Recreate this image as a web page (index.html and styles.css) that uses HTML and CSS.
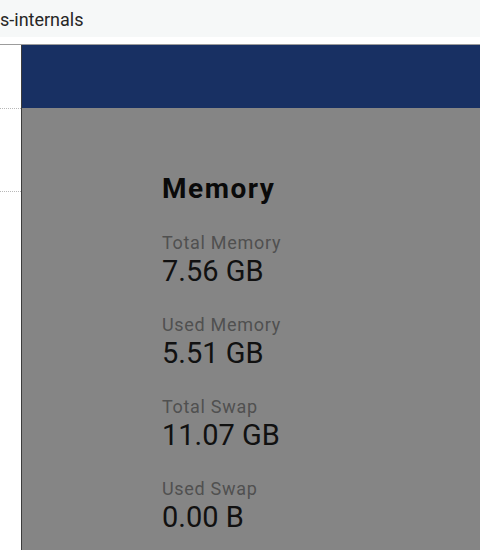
FILE: index.html
```html
<!DOCTYPE html>
<html lang="en">
<head>
    <meta charset="UTF-8">
    <meta name="viewport" content="width=device-width, initial-scale=1.0">
    <title>Memory</title>
    <link rel="stylesheet" href="styles.css">
</head>
<body>
    <header class="topbar">
        <span class="app-name">s-internals</span>
    </header>
    <div class="strip"></div>
    <div class="layout">
        <nav class="sidebar">
            <div class="nav-item first"></div>
            <div class="nav-item"></div>
        </nav>
        <main class="content">
            <div class="banner"></div>
            <section class="panel">
                <h2 class="panel-title">Memory</h2>
                <div class="stat">
                    <div class="stat-label">Total Memory</div>
                    <div class="stat-value">7.56 GB</div>
                </div>
                <div class="stat">
                    <div class="stat-label">Used Memory</div>
                    <div class="stat-value">5.51 GB</div>
                </div>
                <div class="stat">
                    <div class="stat-label">Total Swap</div>
                    <div class="stat-value">11.07 GB</div>
                </div>
                <div class="stat">
                    <div class="stat-label">Used Swap</div>
                    <div class="stat-value">0.00 B</div>
                </div>
            </section>
        </main>
    </div>
</body>
</html>
```
FILE: styles.css
```css
body {
    margin: 0;
    font-family: Roboto, "Noto Sans", sans-serif;
    background-color: #fff;
    height: 550px;
    overflow: hidden;
    display: flex;
    flex-direction: column;
}

.topbar {
    height: 37px;
    background-color: #f6f8f8;
    display: flex;
    align-items: center;
}

.app-name {
    font-size: 18px;
    color: #262626;
    line-height: 20px;
    margin-top: 2px;
}

.strip {
    height: 7px;
    background-color: #fff;
    border-bottom: 1px solid #9c9c9c;
}

.layout {
    flex: 1;
    display: flex;
}

.sidebar {
    width: 21px;
    background-color: #fff;
}

.nav-item {
    height: 82px;
    border-bottom: 1px dotted #b8b8b8;
}

.nav-item.first {
    height: 63px;
}

.content {
    flex: 1;
    display: flex;
    flex-direction: column;
    border-left: 1px solid #3c3c3c;
}

.banner {
    height: 63px;
    background-color: #183063;
}

.panel {
    flex: 1;
    background-color: #858585;
    padding: 65px 0 0 140px;
    display: flex;
    flex-direction: column;
    gap: 28px;
}

.panel-title {
    margin: 0;
    font-size: 28px;
    line-height: 32px;
    font-weight: bold;
    letter-spacing: 1.5px;
    color: #0a0a0a;
}

.stat-label {
    font-size: 18px;
    line-height: 20px;
    letter-spacing: 0.7px;
    color: #505050;
}

.stat-value {
    margin-top: 2px;
    font-size: 29px;
    line-height: 32px;
    color: #111;
}
```
